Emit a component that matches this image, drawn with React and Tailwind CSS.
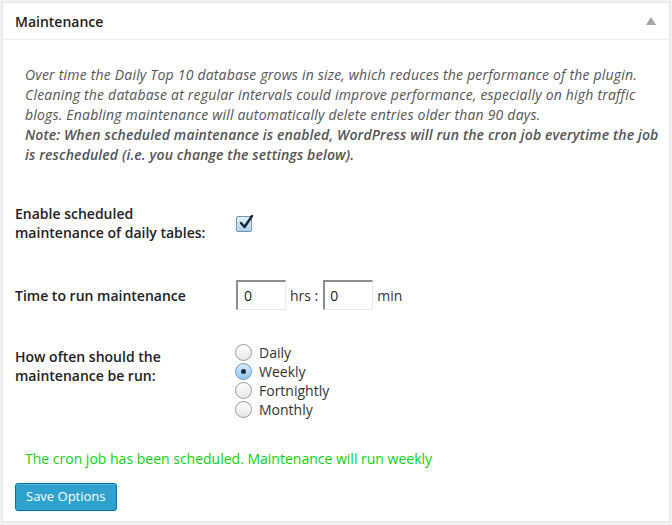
import React from 'react'

function Radio({ checked, label }) {
  return (
    <div className="flex items-center h-[19px]">
      <span
        className={
          'w-[17px] h-[17px] rounded-full border flex items-center justify-center ' +
          (checked
            ? 'border-[#6a9ac9] bg-gradient-to-b from-[#d7ecfb] to-[#8fc6ef]'
            : 'border-[#9a9a9a] bg-gradient-to-b from-white to-[#e6e6e6]')
        }
      >
        {checked && <span className="w-[5px] h-[5px] rounded-full bg-[#1d2b3a]" />}
      </span>
      <span className="ml-[7px] text-[14px] text-[#333]">{label}</span>
    </div>
  )
}

export default function App() {
  return (
    <div className="w-[672px] h-[525px] bg-[#f1f1f1] pt-[2px] px-[2px]" style={{ fontFamily: '"Open Sans", sans-serif' }}>
      <div className="bg-white border border-[#e5e5e5] h-[520px]">
        <div className="h-[37px] border-b border-[#eeeeee] flex items-center justify-between pl-[12px] pr-[13px]">
          <span className="text-[14px] font-semibold text-[#222]">Maintenance</span>
          <svg width="10" height="8" viewBox="0 0 10 8"><path d="M5 0 L10 8 L0 8 Z" fill="#a7a7a7" /></svg>
        </div>

        <div className="pl-[22px] pt-[25px] text-[14px] leading-[20px] italic text-[#555] tracking-[0.2px] whitespace-nowrap">
          Over time the Daily Top 10 database grows in size, which reduces the performance of the plugin.
          <br />
          Cleaning the database at regular intervals could improve performance, especially on high traffic
          <br />
          blogs. Enabling maintenance will automatically delete entries older than 90 days.
          <br />
          <span className="font-semibold tracking-[0.13px]">
            Note: When scheduled maintenance is enabled, WordPress will run the cron job everytime the job
            <br />
            is rescheduled (i.e. you change the settings below).
          </span>
        </div>

        <div className="pl-[12px] pt-[39px] text-[14px] text-[#222]">
          <div className="flex">
            <div className="w-[221px] font-semibold leading-[19px]">
              Enable scheduled
              <br />
              maintenance of daily tables:
            </div>
            <div className="pt-[12px]">
              <span className="w-[16px] h-[16px] flex items-center justify-center border border-[#7a8fa8] bg-gradient-to-b from-[#e4f1fb] to-[#a9d0f0] rounded-[2px] relative">
                <svg width="16" height="16" viewBox="0 0 16 16" className="absolute -top-[3px] left-[1px]">
                  <path d="M3 9 L6.5 13 L14 2" stroke="#1a2533" strokeWidth="2.4" fill="none" strokeLinecap="round" strokeLinejoin="round" />
                </svg>
              </span>
            </div>
          </div>

          <div className="flex items-center mt-[38px]">
            <div className="w-[221px] font-semibold">Time to run maintenance</div>
            <input
              readOnly
              value="0"
              className="w-[50px] h-[30px] border-2 border-[#8e8e8e] border-r-[#e8e8e8] border-b-[#e8e8e8] border-r border-b px-[6px] text-[14px] text-[#222] outline-none"
            />
            <span className="ml-[4px] mr-[5px] text-[#333]">hrs :</span>
            <input
              readOnly
              value="0"
              className="w-[50px] h-[30px] border-2 border-[#8e8e8e] border-r-[#e8e8e8] border-b-[#e8e8e8] border-r border-b px-[5px] text-[14px] text-[#222] outline-none"
            />
            <span className="ml-[4px] text-[#333]">min</span>
          </div>

          <div className="flex mt-[32px]">
            <div className="w-[220px] font-semibold leading-[19px] pt-[5px]">
              How often should the
              <br />
              maintenance be run:
            </div>
            <div className="pt-[1px]">
              <Radio label="Daily" />
              <Radio label="Weekly" checked />
              <Radio label="Fortnightly" />
              <Radio label="Monthly" />
            </div>
          </div>
        </div>

        <div className="pl-[22px] mt-[29px] text-[14px] text-[#0fcf0f]">
          The cron job has been scheduled. Maintenance will run weekly
        </div>

        <div className="pl-[12px] mt-[14px]">
          <button className="h-[28px] px-[10px] rounded-[3px] bg-[#2ea2cc] border border-[#0074a2] text-white text-[13px] shadow-[inset_0_1px_0_rgba(120,200,230,0.5)]">
            Save Options
          </button>
        </div>
      </div>
    </div>
  )
}
